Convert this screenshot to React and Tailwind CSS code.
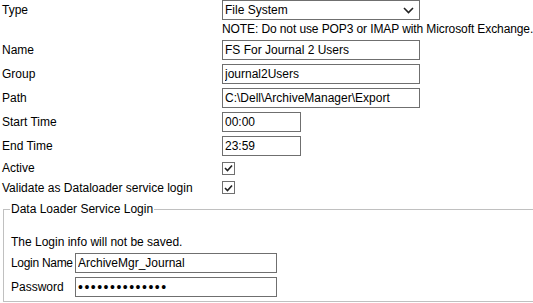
import React from "react";

function Check() {
  return (
    <span className="flex h-[13px] w-[13px] items-center justify-center border border-[#707070] bg-white">
      <svg width="9" height="8" viewBox="0 0 9 8">
        <path d="M1 4 L3.5 6.5 L8 1.5" fill="none" stroke="#222" strokeWidth="1.6" />
      </svg>
    </span>
  );
}

function Row({ label, children, className = "h-[24px]" }) {
  return (
    <div className={"flex items-center " + className}>
      <div className="w-[222px] shrink-0 whitespace-nowrap pl-[2px]">{label}</div>
      {children}
    </div>
  );
}

function TextBox({ value, width = "w-[198px]", type = "text", extra = "text-[12px]" }) {
  return (
    <input
      type={type}
      defaultValue={value}
      className={"h-[20px] shrink-0 border border-[#6f6f6f] bg-white px-[2px] outline-none " + width + " " + extra}
    />
  );
}

export default function App() {
  return (
    <div className="relative h-[303px] w-[533px] overflow-hidden bg-white font-['Liberation_Sans',sans-serif] text-[12px] text-black">
      {/* General settings */}
      <Row label="Type" className="h-[20px]">
        <div className="flex h-[20px] w-[198px] shrink-0 items-center justify-between border border-[#6f6f6f] bg-white pl-[2px] pr-[5px]">
          <span>File System</span>
          <svg width="11" height="7" viewBox="0 0 11 7">
            <path d="M1 1 L5.5 5.5 L10 1" fill="none" stroke="#222" strokeWidth="1.6" />
          </svg>
        </div>
      </Row>
      <Row label="" className="h-[18px]">
        <span className="whitespace-nowrap tracking-[-0.1px]">
          NOTE: Do not use POP3 or IMAP with Microsoft Exchange.
        </span>
      </Row>
      <Row label="Name">
        <TextBox value="FS For Journal 2 Users" />
      </Row>
      <Row label="Group">
        <TextBox value="journal2Users" />
      </Row>
      <Row label="Path">
        <TextBox value="C:\Dell\ArchiveManager\Export" />
      </Row>
      <Row label="Start Time">
        <TextBox value="00:00" width="w-[79px]" />
      </Row>
      <Row label="End Time">
        <TextBox value="23:59" width="w-[79px]" />
      </Row>
      <Row label="Active" className="h-[20px]">
        <Check />
      </Row>
      <Row label="Validate as Dataloader service login" className="h-[19px]">
        <Check />
      </Row>

      {/* Data loader login */}
      <fieldset className="mt-[5px] ml-[3px] h-[100px] w-[560px] border border-[#c0c0c0] px-[6px]">
        <legend className="px-[1px] leading-[14px]">Data Loader Service Login</legend>
        <div className="pt-[17px] pl-[1px] leading-[18px]">The Login info will not be saved.</div>
        <div className="mt-[2px] flex flex-col gap-[4px]">
          <div className="flex items-center">
            <div className="w-[65px] shrink-0 whitespace-nowrap pl-[1px] tracking-[-0.3px]">Login Name</div>
            <TextBox value="ArchiveMgr_Journal" width="w-[202px]" />
          </div>
          <div className="flex items-center">
            <div className="w-[65px] shrink-0 whitespace-nowrap pl-[1px]">Password</div>
            <TextBox
              value="ArchiveMgrJour"
              type="password"
              width="w-[202px]"
              extra="text-[14px] tracking-[1.5px]"
            />
          </div>
        </div>
      </fieldset>
    </div>
  );
}
